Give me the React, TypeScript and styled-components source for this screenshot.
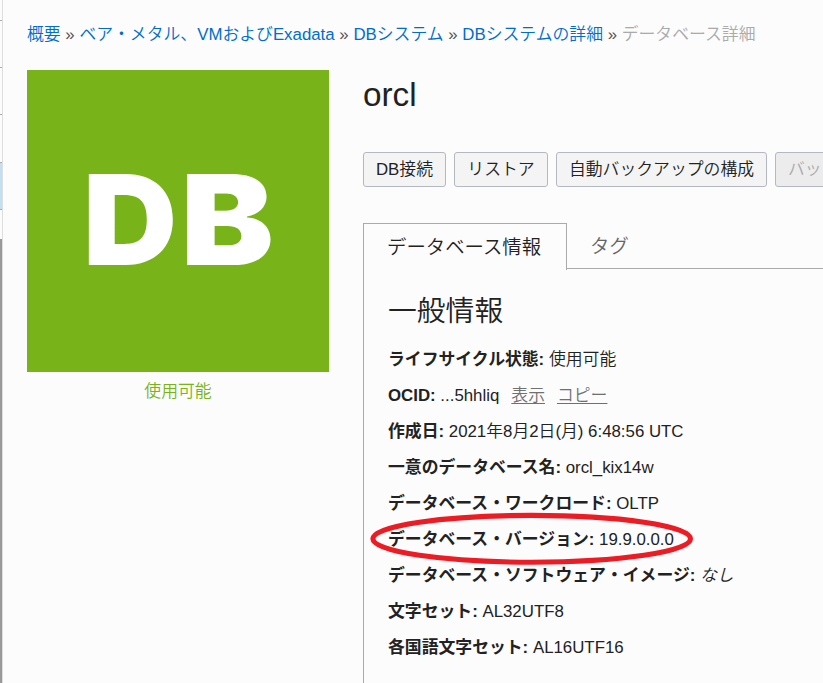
import React from "react";
import styled, { createGlobalStyle } from "styled-components";

const GlobalStyle = createGlobalStyle`
  * { box-sizing: border-box; }
  html, body { margin: 0; padding: 0; background: #fcfcfc; overflow: hidden; }
  body {
    font-family: "Liberation Sans", "Noto Sans CJK JP", sans-serif;
    font-size: 16.84px;
    font-weight: 350;
    color: #222;
  }
`;

const Page = styled.div`
  display: flex;
  width: 823px;
  height: 683px;
  overflow: hidden;
`;

const Rail = styled.aside`
  flex: none;
  display: flex;
  flex-direction: column;
  width: 3px;
  border-right: 1px solid #dedede;
`;

const RailItem = styled.div<{ $height: number; $active?: boolean }>`
  flex: none;
  height: ${(p) => p.$height}px;
  border-bottom: 1px solid #aaa;
  background: ${(p) => (p.$active ? "#c3dff5" : "#fcfcfc")};
`;

const RailGap = styled.div`
  flex: none;
  height: 29px;
`;

const RailFill = styled.div`
  flex: 1;
  background: #999;
`;

const Content = styled.main`
  flex: none;
  width: 820px;
  padding: 22px 0 0 24px;
`;

const Breadcrumb = styled.nav`
  height: 24px;
  line-height: 25px;
  white-space: pre;
  color: #555;
`;

const Crumb = styled.a`
  color: #006dcc;
`;

const CurrentCrumb = styled.span`
  color: #aaa;
`;

const Columns = styled.div`
  display: flex;
  gap: 34px;
  margin-top: 24px;
`;

const Summary = styled.section`
  flex: none;
  width: 302px;
`;

const Tile = styled.div`
  height: 302px;
  background: #78b319;
`;

const TileMark = styled.svg`
  display: block;
`;

const TileLetter = styled.text`
  fill: #fff;
  font-family: Inter, sans-serif;
  font-weight: 900;
  font-size: 125.2px;
`;

const Status = styled.div`
  height: 40px;
  line-height: 40px;
  text-align: center;
  color: #78b319;
`;

const Details = styled.section`
  flex: none;
  width: 484px;
`;

const Title = styled.h1`
  margin: 0;
  height: 82px;
  line-height: 49px;
  font-size: 33.3px;
  font-weight: 350;
`;

const Actions = styled.div`
  display: flex;
  gap: 8px;
  width: 484px;
  overflow: hidden;
`;

const Button = styled.button<{ $width: number }>`
  flex: none;
  width: ${(p) => p.$width}px;
  height: 35px;
  padding: 0;
  border: 1px solid #b4b8c0;
  border-radius: 3px;
  background: #f4f4f4;
  font: inherit;
  line-height: 33px;
  white-space: nowrap;
  color: #222;
  &:disabled { background: #ececec; color: #aaa; }
`;

const Tabs = styled.div`
  display: flex;
  height: 46px;
  margin-top: 36px;
`;

const Tab = styled.div<{ $active?: boolean }>`
  width: ${(p) => (p.$active ? "204px" : "auto")};
  height: ${(p) => (p.$active ? "47px" : "46px")};
  flex: ${(p) => (p.$active ? "none" : "1")};
  padding-left: 23px;
  border: 0 solid #aaa;
  border-width: ${(p) => (p.$active ? "1px 1px 0 1px" : "0 0 1px 0")};
  color: ${(p) => (p.$active ? "#222" : "#666")};
  font-size: 19.4px;
  line-height: ${(p) => (p.$active ? "46px" : "47px")};
  white-space: nowrap;
`;

const Panel = styled.div`
  height: 414px;
  padding: 17px 0 0 24px;
  border-left: 1px solid #aaa;
`;

const Heading = styled.h2`
  margin: 0;
  height: 56px;
  line-height: 50px;
  font-size: 28.8px;
  font-weight: 350;
`;

const Row = styled.div`
  position: relative;
  height: 36px;
  line-height: 36px;
  white-space: pre;
`;

const Label = styled.b`
  font-weight: 700;
`;

const Action = styled.a`
  margin-left: 12px;
  color: #707070;
  text-decoration: underline 1px;
  text-underline-offset: 2px;
  text-decoration-skip-ink: none;
`;

const Ring = styled.svg`
  position: absolute;
  left: -19px;
  top: -9px;
  overflow: visible;
`;

export default function App() {
  return (
    <>
      <GlobalStyle />
      <Page>
        <Rail>
          <RailItem $height={21} />
          <RailItem $height={47} />
          <RailItem $height={47} />
          <RailItem $height={48} />
          <RailItem $height={47} $active />
          <RailGap />
          <RailFill />
        </Rail>
        <Content>
          <Breadcrumb>
            <Crumb>概要</Crumb> » <Crumb>ベア・メタル、VMおよびExadata</Crumb> » <Crumb>DBシステム</Crumb> »{" "}
            <Crumb>DBシステムの詳細</Crumb> » <CurrentCrumb>データベース詳細</CurrentCrumb>
          </Breadcrumb>
          <Columns>
            <Summary>
              <Tile>
                <TileMark width="302" height="302" viewBox="0 0 302 302">
                  <TileLetter transform="translate(55.8 195) scale(1.045 1)">D</TileLetter>
                  <TileLetter transform="translate(153.6 195) scale(1.115 1)">B</TileLetter>
                </TileMark>
              </Tile>
              <Status>使用可能</Status>
            </Summary>
            <Details>
              <Title>orcl</Title>
              <Actions>
                <Button $width={83}>DB接続</Button>
                <Button $width={94}>リストア</Button>
                <Button $width={211}>自動バックアップの構成</Button>
                <Button $width={127} disabled>バックアップ</Button>
              </Actions>
              <Tabs>
                <Tab $active>データベース情報</Tab>
                <Tab>タグ</Tab>
              </Tabs>
              <Panel>
                <Heading>一般情報</Heading>
                <Row><Label>ライフサイクル状態:</Label> 使用可能</Row>
                <Row>
                  <Label>OCID:</Label> ...5hhliq<Action>表示</Action><Action>コピー</Action>
                </Row>
                <Row><Label>作成日:</Label> 2021年8月2日(月) 6:48:56 UTC</Row>
                <Row><Label>一意のデータベース名:</Label> orcl_kix14w</Row>
                <Row><Label>データベース・ワークロード:</Label> OLTP</Row>
                <Row>
                  <Label>データベース・バージョン:</Label> 19.9.0.0.0
                  <Ring width="325" height="52" viewBox="0 0 325 52">
                    <ellipse cx="162.7" cy="25.8" rx="158.8" ry="23.4" fill="none" stroke="#ed1c24" strokeWidth="5.1" />
                  </Ring>
                </Row>
                <Row><Label>データベース・ソフトウェア・イメージ:</Label> <i>なし</i></Row>
                <Row><Label>文字セット:</Label> AL32UTF8</Row>
                <Row><Label>各国語文字セット:</Label> AL16UTF16</Row>
              </Panel>
            </Details>
          </Columns>
        </Content>
      </Page>
    </>
  );
}
